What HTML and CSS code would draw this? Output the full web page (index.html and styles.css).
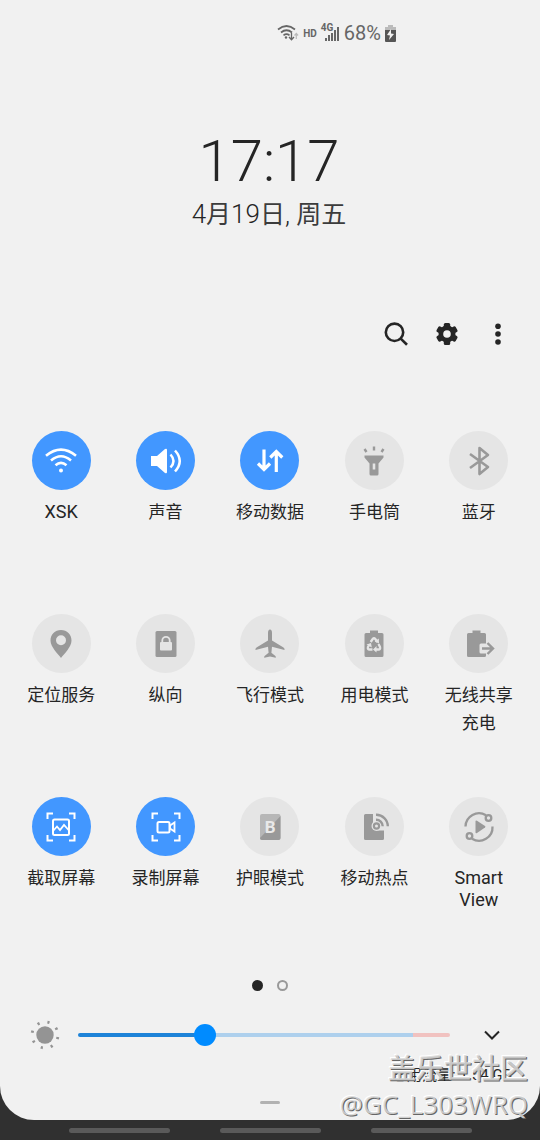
FILE: index.html
```
<!DOCTYPE html>
<html lang="zh-CN">
<head>
<meta charset="utf-8">
<meta name="viewport" content="width=device-width, initial-scale=1">
<title>快捷设置</title>
<link rel="stylesheet" href="styles.css">
</head>
<body>
<main class="panel">
  <div class="status">
    <svg class="status-wifi" viewBox="0 0 22 18" width="22" height="18" fill="none" stroke="#666" stroke-width="1.7">
      <path d="M1 5.5Q9.500-1.500 18 5.500M4 8.500Q9.500 4 15 8.500M6.500 11.300Q9.500 9 12.500 11.300"/>
      <circle cx="9" cy="13.500" r="1.200" fill="#666" stroke="none"/>
      <path d="M14.500 9v6.500M12 13l2.500 2.800L17 13" stroke-width="1.300"/>
      <path d="M19.300 15V9.500M17.500 11.500l1.800-2 1.800 2" stroke="#bbb" stroke-width="1.200"/>
    </svg>
    <span class="hd">HD</span>
    <span class="signal">
      <svg viewBox="0 0 19 18" width="19" height="18" fill="#666"><path d="M4 14h2v3H4zM7 11h2v6H7zM10 9h2v8h-2zM13 6h2v11h-2zM16 3h2v14h-2z"/></svg>
      <span class="net">4G</span>
    </span>
    <span class="percent">68%</span>
    <svg viewBox="0 0 11 17" width="11" height="17"><path fill="#bbb" d="M3 0h5v2h3v5H0V2h3z"/><path fill="#555" d="M0 5h11v11q0 1-1 1H1q-1 0-1-1z"/><path fill="#f1f1f1" d="M6 4L2 10l3 .5L4 15l5-6-3-.5z"/></svg>
  </div>

  <header class="clock">
    <time class="time">17:17</time>
    <div class="date">4<span class="han">月</span>19<span class="han">日</span>, <span class="han">周五</span></div>
  </header>

  <nav class="actions">
    <button class="plain" aria-label="搜索"><svg viewBox="0 0 26 26" width="26" height="26" fill="none" stroke="#252525" stroke-width="2.600"><circle cx="11.500" cy="11.300" r="8.700"/><path d="M17.700 17.600l6.300 6.200"/></svg></button>
    <button class="plain" aria-label="设置"><svg viewBox="0 0 26 26" width="26" height="26"><g fill="#252525"><circle cx="13" cy="13" r="8.500"/><rect x="9.800" y="2" width="6.400" height="22" rx="1.500"/><rect x="9.800" y="2" width="6.400" height="22" rx="1.500" transform="rotate(60 13 13)"/><rect x="9.800" y="2" width="6.400" height="22" rx="1.500" transform="rotate(120 13 13)"/></g><circle cx="13" cy="13" r="3.800" fill="#f1f1f1"/></svg></button>
    <button class="plain" aria-label="更多选项"><svg viewBox="0 0 26 26" width="26" height="26" fill="#252525"><circle cx="13" cy="5.200" r="2.800"/><circle cx="13" cy="13" r="2.800"/><circle cx="13" cy="21" r="2.800"/></svg></button>
  </nav>

  <section class="tiles">
    <button class="tile on"><span class="disc"><svg viewBox="0 0 36 36"><g fill="none" stroke="#fff" stroke-width="2.600"><path d="M3 12.800Q18 0.500 33 12.800M8 17.500Q18 9 28 17.500M12.500 22.300Q18 17.500 23.500 22.300"/></g><circle cx="18" cy="27.500" r="2" fill="#fff"/></svg></span><span class="name latin">XSK</span></button>
    <button class="tile on"><span class="disc"><svg viewBox="0 0 36 36"><path fill="#fff" d="M3 13h6l8-7q2-1 2 1v22q0 2-2 1l-8-7H3z"/><g fill="none" stroke="#fff" stroke-width="2.500"><path d="M22.500 11.500Q28.500 18 22.500 24.500M27 7.500Q36.500 18 27 28.500"/></g></svg></span><span class="name">声音</span></button>
    <button class="tile on"><span class="disc"><svg viewBox="0 0 36 36" fill="none" stroke="#fff" stroke-width="3.200"><path d="M12 6.500v19M6 20.500l6 6 6-6M24.300 29V9.500M18.300 14.500l6-6 6 6"/></svg></span><span class="name">移动数据</span></button>
    <button class="tile"><span class="disc"><svg viewBox="0 0 36 36"><path fill="#999" fill-rule="evenodd" d="M8.500 12.500h19v2l-5 6V31q0 1.500-1.500 1.500h-6q-1.500 0-1.500-1.500V20.500l-5-6zM16.700 20.500v6h2.600v-6z"/><path stroke="#999" stroke-width="2.400" d="M18 3.500v4M8.500 6l2 3M27.500 6l-2 3"/></svg></span><span class="name">手电筒</span></button>
    <button class="tile"><span class="disc"><svg viewBox="0 0 36 36" fill="none" stroke="#999" stroke-width="2.600" stroke-linejoin="round"><path d="M9 11l18 13-8.500 7V5L27 12 9 25"/></svg></span><span class="name">蓝牙</span></button>

    <button class="tile"><span class="disc"><svg viewBox="0 0 36 36"><path fill="#999" fill-rule="evenodd" d="M18 4c6 0 10.500 4.500 10.500 10.500C28.500 21 21 28 18 32 15 28 7.500 21 7.500 14.500 7.500 8.500 12 4 18 4zM18 9.300a5 5 0 100 10 5 5 0 000-10z"/></svg></span><span class="name">定位服务</span></button>
    <button class="tile"><span class="disc"><svg viewBox="0 0 36 36"><rect x="7.500" y="5" width="21" height="26" rx="1.500" fill="#999"/><rect x="12" y="16" width="12" height="8.500" rx="1" fill="#e5e5e5"/><path d="M14.300 17v-2.500a3.700 3.700 0 017.400 0V17" fill="none" stroke="#e5e5e5" stroke-width="1.800"/></svg></span><span class="name">纵向</span></button>
    <button class="tile"><span class="disc"><svg viewBox="0 0 36 36"><path fill="#999" d="M18 3.500q2 0 2 3.500v7.500l11.500 7q1.500 1 1 2.500L20 20.700l-.6 6 4 3.300q.8 1 .3 1.700L18 30.500l-5.700 1.200q-.5-.7.3-1.700l4-3.300-.6-6L3.500 24q-.5-1.500 1-2.500l11.500-7V7q0-3.500 2-3.500z"/></svg></span><span class="name">飞行模式</span></button>
    <button class="tile"><span class="disc"><svg viewBox="0 0 36 36"><path fill="#999" d="M14 4.500h8V7h4q1.500 0 1.500 1.500v21q0 1.500-1.500 1.500H10q-1.500 0-1.500-1.500v-21Q8.500 7 10 7h4z"/><g fill="none" stroke="#e5e5e5" stroke-width="2.300"><path d="M14.700 16l2-3q1.300-1.500 2.600 0l2 3M22.500 18l1.500 3q.7 2.500-1.500 2.500h-3M16.500 23.500h-3q-2.200 0-1.500-2.500l1.500-2.500"/></g><path fill="#e5e5e5" d="M22.800 12.500l.2 5-4.300-2zM20.500 20v6.500l-3.500-3zM10.500 18.500l4.500-1.500.8 4.500z"/></svg></span><span class="name">用电模式</span></button>
    <button class="tile"><span class="disc"><svg viewBox="0 0 36 36"><path fill="#999" d="M11.500 4.500h8V7h4Q25 7 25 8.500v9h-5q-1.500 0-1.500 1.500v7q0 1.500 1.500 1.500h5v2q0 1.500-1.500 1.500H7.500Q6 31 6 29.500v-21Q6 7 7.500 7h4z"/><path fill="none" stroke="#999" stroke-width="2.400" d="M21 22.500h10.500M26.500 17l5.500 5.500-5.500 5.500"/></svg></span><span class="name">无线共享<br>充电</span></button>

    <button class="tile on"><span class="disc"><svg viewBox="0 0 36 36" fill="none" stroke="#fff" stroke-width="2"><path d="M4.500 10V4.500H10M26 4.500h5.500V10M31.500 26v5.500H26M10 31.500H4.500V26"/><rect x="10" y="10.500" width="16" height="15.500" rx="1.500"/><path d="M10 22l4-4.500 3 3.500 4-5 5 5.500" stroke-width="1.800"/></svg></span><span class="name">截取屏幕</span></button>
    <button class="tile on"><span class="disc"><svg viewBox="0 0 36 36" fill="none" stroke="#fff" stroke-width="2"><path d="M4.500 10V4.500H10M26 4.500h5.500V10M31.500 26v5.500H26M10 31.500H4.500V26"/><rect x="9.500" y="13" width="12" height="10.500" rx="1.500"/><path d="M22 16.500l4.500-3v9l-4.500-3z" stroke-width="1.800"/></svg></span><span class="name">录制屏幕</span></button>
    <button class="tile"><span class="disc"><svg viewBox="0 0 36 36"><rect x="8" y="5" width="20.500" height="26" rx="2" fill="#b7b7b7"/><path fill="#999" d="M28.500 7v22q0 2-2 2H10q-2 0-2-2z"/><text class="glyph" x="18.200" y="24" text-anchor="middle">B</text></svg></span><span class="name">护眼模式</span></button>
    <button class="tile"><span class="disc"><svg viewBox="0 0 36 36"><path fill="#999" d="M9.500 5H17v9a5.500 5.500 0 005 7.500h6v8q0 1.500-1.500 1.500h-17Q8 31 8 29.500v-23Q8 5 9.500 5z"/><circle cx="20.500" cy="17" r="5" fill="#e5e5e5"/><g fill="none" stroke="#999"><circle cx="20.500" cy="17" r="2.600" stroke-width="2.200"/><path d="M20 10.700a6.500 6.500 0 016.700 6.500M20 5.800a11.500 11.500 0 0111.800 11.500" stroke-width="2.400"/></g></svg></span><span class="name">移动热点</span></button>
    <button class="tile"><span class="disc"><svg viewBox="0 0 36 36"><path fill="#999" d="M14.500 12.500q0-1.500 1.500-.8l8 5.300q1 .8 0 1.600l-8 5.400q-1.500.7-1.500-.8z"/><g fill="none" stroke="#999" stroke-width="2.300"><path d="M4.500 17.500A13.500 13.500 0 0125 6.200M31.500 17.500A13.500 13.500 0 0111 29.800"/><circle cx="27.500" cy="9" r="2.800"/><circle cx="8.500" cy="27" r="2.800"/></g></svg></span><span class="name latin">Smart<br>View</span></button>
  </section>

  <div class="pages"><span class="dot current"></span><span class="dot"></span></div>

  <div class="brightness">
    <svg viewBox="0 0 30 30" width="30" height="30"><circle cx="15" cy="15" r="8.700" fill="#949494"/><circle cx="15" cy="15" r="13" fill="none" stroke="#949494" stroke-width="2.800" stroke-dasharray="2.200 8.010" transform="rotate(9 15 15)"/></svg>
    <input class="slider" type="range" min="0" max="100" value="33" aria-label="亮度">
    <button class="plain" aria-label="展开"><svg viewBox="0 0 26 26" width="26" height="26" fill="none" stroke="#252525" stroke-width="2"><path d="M6 9.500l7 7 7-7"/></svg></button>
  </div>

  <div class="usage">已用流量: 1.54 GB</div>
  <div class="handle"></div>
</main>
<footer class="navhints"><span class="pill"></span><span class="pill"></span><span class="pill"></span></footer>
<div class="watermark"><span class="mark-cn">盖乐世社区</span><span class="mark-id">@GC_L303WRQ</span></div>
</body>
</html>
```
FILE: styles.css
```
* { box-sizing: border-box; }
body {
  margin: 0;
  min-height: 100vh;
  display: flex;
  flex-direction: column;
  position: relative;
  background: #303030;
  color: #252525;
  font-family: Roboto, "Noto Sans CJK SC", sans-serif;
}
button {
  border: 0;
  padding: 0;
  background: none;
  color: inherit;
  font: inherit;
}
svg { display: block; }
.panel {
  flex: 1;
  display: flex;
  flex-direction: column;
  background: #f1f1f1;
  border-radius: 0 0 34px 34px;
}
.status {
  display: flex;
  align-items: center;
  justify-content: flex-end;
  height: 20px;
  margin-top: 23px;
  padding-right: 144px;
  gap: 4px;
  color: #666;
}
.hd { font-size: 10px; font-weight: 700; }
.signal { position: relative; }
.net {
  position: absolute;
  top: -2px;
  left: 0;
  font-size: 10px;
  line-height: 12px;
  font-weight: 700;
}
.percent { font-size: 20px; line-height: 20px; }
.clock {
  display: flex;
  flex-direction: column;
  align-items: center;
  margin-top: 83px;
  padding-right: 2px;
}
.time { font-size: 58px; line-height: 70px; font-weight: 300; }
.date { font-size: 26px; line-height: 36px; font-weight: 300; }
.han { font-size: 25px; font-weight: 400; color: #3c3c3c; }
.actions {
  display: flex;
  justify-content: flex-end;
  gap: 25px;
  margin-top: 88px;
  padding-right: 29px;
}
.tiles {
  display: grid;
  grid-template-columns: repeat(5, 1fr);
  grid-auto-rows: 183px;
  margin-top: 84px;
  padding: 0 9px;
}
.tile {
  display: flex;
  flex-direction: column;
  align-items: center;
  gap: 8px;
}
.disc {
  display: grid;
  place-items: center;
  width: 59px;
  height: 59px;
  border-radius: 50%;
  background: #e5e5e5;
}
.disc svg { width: 36px; height: 36px; }
.on .disc { background: #4297ff; }
.name { font-size: 17px; line-height: 28px; }
.latin { font-size: 18px; line-height: 22px; padding-top: 3px; }
.glyph { font: 700 17px Roboto, sans-serif; fill: #e9e9e9; }
.pages {
  display: flex;
  justify-content: center;
  gap: 14px;
}
.dot {
  width: 11px;
  height: 11px;
  border: 2px solid #999;
  border-radius: 50%;
}
.current { background: #252525; border-color: #252525; }
.brightness {
  display: flex;
  align-items: center;
  height: 30px;
  margin-top: 29px;
  padding: 0 35px 0 30px;
}
.slider {
  flex: 1;
  min-width: 0;
  height: 22px;
  margin: 0 29px 0 18px;
  appearance: none;
  background: none;
}
.slider::-webkit-slider-runnable-track {
  height: 4px;
  border-radius: 2px;
  background: linear-gradient(to right, #1e83d8 34%, #aed0ed 34% 90%, #f1c2c0 90%);
}
.slider::-webkit-slider-thumb {
  appearance: none;
  width: 22px;
  height: 22px;
  margin-top: -9px;
  border-radius: 50%;
  background: #008bff;
}
.usage {
  margin-top: 14px;
  padding-right: 28px;
  font-size: 15px;
  line-height: 22px;
  text-align: right;
}
.handle {
  width: 20px;
  height: 3px;
  margin: 15px auto 16px;
  border-radius: 2px;
  background: #b2b2b2;
}
.navhints {
  display: flex;
  justify-content: center;
  align-items: center;
  gap: 50px;
  height: 20px;
}
.pill {
  width: 101px;
  height: 5px;
  border-radius: 3px;
  background: #5a5a5a;
}
.watermark {
  position: absolute;
  right: 12px;
  bottom: 18px;
  display: flex;
  flex-direction: column;
  align-items: flex-end;
  color: rgba(216, 216, 216, 0.85);
  font-family: "Open Sans", "Noto Sans CJK SC", sans-serif;
  text-shadow: 1px 1px 0 #666, -1px -1px 0 #fff;
}
.mark-cn { font-size: 28px; line-height: 36px; font-weight: 500; }
.mark-id { font-size: 26px; line-height: 36px; }
```
